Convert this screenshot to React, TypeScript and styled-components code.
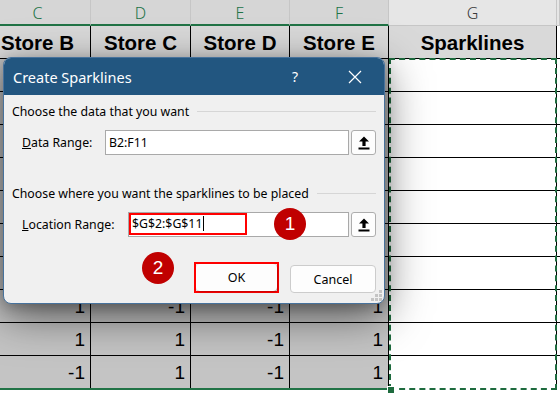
import styled, { createGlobalStyle } from 'styled-components';

const GlobalStyle = createGlobalStyle`
  html, body {
    margin: 0;
    padding: 0;
    background: #ffffff;
    overflow: hidden;
  }
  #root {
    width: 560px;
    height: 393px;
  }
`;

const dataRows = [
  ['1', '-1', '-1', '1'],
  ['1', '1', '-1', '1'],
  ['-1', '1', '-1', '1'],
];

const headers = ['Store B', 'Store C', 'Store D', 'Store E', 'Sparklines'];
const letters = ['C', 'D', 'E', 'F', 'G'];

export default function App() {
  // rows 2..8 sit behind the dialog, only the last three show values
  const hidden = 7;

  return (
    <>
      <GlobalStyle />
      <Page>
        <Sheet>
          {letters.map((l, i) => (
            <ColLetter key={l} $selected={i < 4}>
              {l}
            </ColLetter>
          ))}
          <ColLetter $selected={false} />

          {headers.map((h) => (
            <HeadCell key={h}>{h}</HeadCell>
          ))}
          <Filler />

          {Array.from({ length: hidden }).map((_, r) => (
            <RowGroup key={`h${r}`}>
              {[0, 1, 2, 3].map((c) => (
                <DataCell key={c} />
              ))}
              <SparkCell />
              <Filler />
            </RowGroup>
          ))}

          {dataRows.map((row, r) => (
            <RowGroup key={`d${r}`}>
              {row.map((v, c) => (
                <DataCell key={c}>{v}</DataCell>
              ))}
              <SparkCell />
              <Filler />
            </RowGroup>
          ))}

          {[0, 1, 2, 3].map((c) => (
            <FootCell key={c} />
          ))}
          <FootCell $plain />
          <FootCell $plain />

          <Marquee />
          <MarqueeHandle />
        </Sheet>

        <Dialog>
          <TitleBar>
            <TitleText>Create Sparklines</TitleText>
            <TitleTools>
              <HelpMark>?</HelpMark>
              <CloseIcon viewBox="0 0 14 14">
                <path d="M1 1 L13 13 M13 1 L1 13" stroke="#ffffff" strokeWidth="1.2" />
              </CloseIcon>
            </TitleTools>
          </TitleBar>

          <Body>
            <GroupLabel>Choose the data that you want</GroupLabel>
            <FieldRow>
              <FieldLabel $width={83}>
                <u>D</u>ata Range:
              </FieldLabel>
              <RangeInput>B2:F11</RangeInput>
              <PickButton>
                <UploadIcon />
              </PickButton>
            </FieldRow>

            <GroupLabel $gap={30}>Choose where you want the sparklines to be placed</GroupLabel>
            <FieldRow>
              <FieldLabel $width={106}>
                <u>L</u>ocation Range:
              </FieldLabel>
              <RangeInput>
                <Highlight>
                  $G$2:$G$11<Caret />
                </Highlight>
                <Badge $over>1</Badge>
              </RangeInput>
              <PickButton>
                <UploadIcon />
              </PickButton>
            </FieldRow>

            <ButtonRow>
              <Badge>2</Badge>
              <OkWrap>
                <DialogButton $primary>OK</DialogButton>
              </OkWrap>
              <DialogButton>Cancel</DialogButton>
            </ButtonRow>
          </Body>

          <Grip viewBox="0 0 11 11">
            <rect x="8" y="0" width="3" height="3" fill="#c4c4c4" />
            <rect x="4" y="4" width="3" height="3" fill="#c4c4c4" />
            <rect x="8" y="4" width="3" height="3" fill="#c4c4c4" />
            <rect x="0" y="8" width="3" height="3" fill="#c4c4c4" />
            <rect x="4" y="8" width="3" height="3" fill="#c4c4c4" />
            <rect x="8" y="8" width="3" height="3" fill="#c4c4c4" />
          </Grip>
        </Dialog>
      </Page>
    </>
  );
}

function UploadIcon() {
  return (
    <svg width="12" height="14" viewBox="0 0 12 14">
      <polygon points="6,0.5 11,5.5 7.6,5.5 7.6,10 4.4,10 4.4,5.5 1,5.5" fill="#000000" />
      <rect x="0.5" y="11.5" width="11" height="2" fill="#000000" />
    </svg>
  );
}

// ─── Styled Components ───────────────────────────────────────────

const Page = styled.div`
  position: relative;
  width: 560px;
  height: 393px;
  overflow: hidden;
  background: #ffffff;
`;

const Sheet = styled.div`
  position: relative;
  display: grid;
  grid-template-columns: 106px 100px 99px 99px 168px 1fr;
  grid-auto-rows: 33px;
  grid-template-rows: 26px 33px;
  margin-left: -15px;
  width: 575px;
  font-family: 'Liberation Sans', Arial, sans-serif;
`;

const RowGroup = styled.div`
  display: contents;
`;

const ColLetter = styled.div<{ $selected: boolean }>`
  box-sizing: border-box;
  display: flex;
  align-items: center;
  justify-content: center;
  background: ${(p) => (p.$selected ? '#d6d6d6' : '#e6e6e6')};
  color: ${(p) => (p.$selected ? '#217346' : '#3a3a3a')};
  border-right: 1px solid #c6c6c6;
  border-bottom: ${(p) => (p.$selected ? '2px solid #217346' : '1px solid #c6c6c6')};
  font-family: 'Noto Sans', 'Open Sans', sans-serif;
  font-size: 16px;
  font-weight: 300;
  padding-top: 1px;
`;

const HeadCell = styled.div`
  box-sizing: border-box;
  display: flex;
  align-items: center;
  justify-content: center;
  background: #d9d9d9;
  border-right: 1px solid #000000;
  border-bottom: 1px solid #000000;
  font-size: 20.5px;
  font-weight: 700;
  color: #000000;
  padding-top: 2px;
`;

const DataCell = styled.div`
  box-sizing: border-box;
  display: flex;
  align-items: center;
  justify-content: flex-end;
  padding: 2px 5px 0 0;
  background: #c4c4c4;
  border-right: 1px solid #000000;
  border-bottom: 1px solid #000000;
  font-size: 19px;
  color: #000000;
`;

const SparkCell = styled.div`
  box-sizing: border-box;
  background: #ffffff;
  border-right: 1px solid #000000;
  border-bottom: 1px solid #000000;
`;

const Filler = styled.div`
  background: #ffffff;
  border-bottom: 1px solid #000000;
`;

const FootCell = styled.div<{ $plain?: boolean }>`
  border-top: ${(p) => (p.$plain ? '0' : '2px solid #217346')};
  background: #ffffff;
  margin-top: -1px;
`;

const Marquee = styled.div`
  position: absolute;
  left: 404px;
  top: 58px;
  width: 168px;
  height: 332px;
  box-sizing: border-box;
  border: 2px dashed #1e6b3e;
  pointer-events: none;
`;

const MarqueeHandle = styled.div`
  position: absolute;
  left: 402px;
  top: 386px;
  width: 6px;
  height: 6px;
  background: #1e6b3e;
  border: 1px solid #ffffff;
`;

const Dialog = styled.div`
  position: absolute;
  left: 3px;
  top: 57px;
  width: 382px;
  height: 247px;
  box-sizing: border-box;
  display: flex;
  flex-direction: column;
  background: #f0f0f0;
  border: 1px solid #47729c;
  border-radius: 8px;
  overflow: hidden;
  box-shadow: 0 12px 44px rgba(0, 0, 0, 0.55), 0 4px 14px rgba(0, 0, 0, 0.22);
  font-family: 'Noto Sans', 'Open Sans', sans-serif;
  color: #000000;
`;

const TitleBar = styled.div`
  display: flex;
  align-items: center;
  justify-content: space-between;
  height: 37px;
  flex-shrink: 0;
  background: #225680;
  padding: 0 0 0 9px;
`;

const TitleText = styled.span`
  color: #ffffff;
  font-size: 14.5px;
  padding-top: 1px;
`;

const TitleTools = styled.div`
  display: flex;
  align-items: center;
  gap: 50px;
  padding-right: 22px;
`;

const HelpMark = styled.span`
  color: #ffffff;
  font-size: 14px;
`;

const CloseIcon = styled.svg`
  width: 14px;
  height: 14px;
`;

const Body = styled.div`
  display: flex;
  flex-direction: column;
  padding: 8px 8px 0 8px;
  flex: 1;
`;

const GroupLabel = styled.div<{ $gap?: number }>`
  display: flex;
  align-items: center;
  gap: 8px;
  font-size: 12.3px;
  margin-top: ${(p) => p.$gap ?? 0}px;
  white-space: nowrap;

  &::after {
    content: '';
    flex: 1;
    height: 1px;
    background: #d6d6d6;
  }
`;

const FieldRow = styled.div`
  display: flex;
  align-items: center;
  margin-top: 10px;
  padding-left: 10px;
  height: 25px;
`;

const FieldLabel = styled.span<{ $width: number }>`
  width: ${(p) => p.$width}px;
  font-size: 12.3px;
  flex-shrink: 0;
`;

const RangeInput = styled.div`
  position: relative;
  flex: 1;
  height: 25px;
  box-sizing: border-box;
  display: flex;
  align-items: center;
  padding-left: 3px;
  background: #ffffff;
  border: 1px solid #a9a9a9;
  font-size: 12.3px;
`;

const Highlight = styled.span`
  display: flex;
  align-items: center;
  height: 22px;
  width: 118px;
  box-sizing: border-box;
  margin-left: -3px;
  margin-top: -2px;
  padding-left: 1px;
  border: 2px solid #ff0000;
`;

const Caret = styled.span`
  display: inline-block;
  width: 1px;
  height: 15px;
  background: #000000;
  margin-left: 1px;
`;

const PickButton = styled.div`
  width: 25px;
  height: 25px;
  box-sizing: border-box;
  margin-left: 2px;
  display: flex;
  align-items: center;
  justify-content: center;
  background: #fdfdfd;
  border: 1px solid #adadad;
  border-radius: 3px;
`;

const Badge = styled.span<{ $over?: boolean }>`
  ${(p) => (p.$over ? `position: absolute; left: 145px; top: -5px;` : '')}
  width: 32px;
  height: 32px;
  border-radius: 50%;
  background: #c00000;
  color: #ffffff;
  display: flex;
  align-items: center;
  justify-content: center;
  font-family: 'Liberation Sans', Arial, sans-serif;
  font-size: 19px;
  flex-shrink: 0;
`;

const ButtonRow = styled.div`
  display: flex;
  align-items: flex-start;
  justify-content: flex-end;
  margin-top: 15px;
`;

const OkWrap = styled.div`
  margin: 10px 11px 0 20px;
  border: 2px solid #ff0000;
  display: flex;
`;

const DialogButton = styled.div<{ $primary?: boolean }>`
  width: ${(p) => (p.$primary ? '81px' : '86px')};
  height: ${(p) => (p.$primary ? '27px' : '28px')};
  box-sizing: border-box;
  display: flex;
  align-items: center;
  justify-content: center;
  margin-top: ${(p) => (p.$primary ? '0' : '13px')};
  background: #fdfdfd;
  border: 1px solid ${(p) => (p.$primary ? '#ffffff' : '#cccccc')};
  border-radius: 4px;
  font-size: 12.5px;
  box-shadow: ${(p) => (p.$primary ? '1px 1px 2px rgba(0,0,0,0.25)' : 'none')};
`;

const Grip = styled.svg`
  position: absolute;
  right: 2px;
  bottom: 2px;
  width: 11px;
  height: 11px;
`;
